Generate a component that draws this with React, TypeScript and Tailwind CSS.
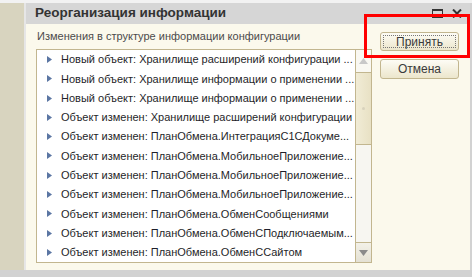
const rows = [
  'Новый объект: Хранилище расширений конфигурации ...',
  'Новый объект: Хранилище информации о применении ...',
  'Новый объект: Хранилище информации о применении ...',
  'Объект изменен: Хранилище расширений конфигурации',
  'Объект изменен: ПланОбмена.ИнтеграцияС1СДокуме...',
  'Объект изменен: ПланОбмена.МобильноеПриложение...',
  'Объект изменен: ПланОбмена.МобильноеПриложение...',
  'Объект изменен: ПланОбмена.МобильноеПриложение...',
  'Объект изменен: ПланОбмена.ОбменСообщениями',
  'Объект изменен: ПланОбмена.ОбменСПодключаемым...',
  'Объект изменен: ПланОбмена.ОбменССайтом',
]

function Arrow() {
  return (
    <svg width="5" height="7" viewBox="0 0 5 7" className="shrink-0">
      <path d="M0 0 L5 3.5 L0 7 Z" fill="#5b76a3" />
    </svg>
  )
}

export default function App() {
  return (
    <div
      className="w-[472px] h-[277px] flex flex-col bg-[#d2d2d2] overflow-hidden relative"
      style={{ fontFamily: '"Liberation Sans", Arial, sans-serif' }}
    >
      <div className="h-[3px] bg-[#f2f2f2]" />
      <div className="flex flex-1">
        <div className="w-[24px] bg-[#d8d4bf]" />
        <div className="w-[2px] bg-[#e6e6e6]" />
        <div className="flex-1 flex flex-col">
          {/* window */}
          <div className="h-[21px] bg-[#d6d6d6] flex items-center pl-[9px] pr-[8px]">
            <span className="text-[13.5px] font-bold text-[#333]">Реорганизация информации</span>
            <div className="ml-auto flex items-center gap-[9px]">
              <svg width="11" height="9" viewBox="0 0 11 9">
                <rect x="0.5" y="0.5" width="10" height="8" fill="none" stroke="#333" />
                <rect x="0" y="0" width="11" height="2" fill="#333" />
              </svg>
              <svg width="10" height="9" viewBox="0 0 10 9">
                <path d="M1 0.5 L9 8.5 M9 0.5 L1 8.5" stroke="#333" strokeWidth="2" />
              </svg>
            </div>
          </div>
          <div className="h-[246px] bg-[#fbf9ec] flex pl-[10px]">
            <div className="flex flex-col">
              <div className="h-[25px] flex items-center pl-[1px] text-[11px] text-[#4b4b4b]">
                Изменения в структуре информации конфигурации
              </div>
              <div className="w-[336px] h-[214px] border border-[#c2b68f] bg-white flex">
                <div className="flex-1 min-w-0 overflow-hidden flex flex-col">
                  {rows.map((r, i) => (
                    <div key={i} className="h-[19.3px] flex items-center pl-[10px] gap-[9px] text-[11px] text-[#1f1f2a] whitespace-nowrap">
                      <Arrow />
                      <span>{r}</span>
                    </div>
                  ))}
                </div>
                <div className="w-[16px] shrink-0 border-l border-[#c2b68f] flex flex-col bg-[#f7f6f1]">
                  <div className="h-[23px] border-b border-[#c2b68f] bg-[#f9f8f2] flex items-center justify-center">
                    <svg width="9" height="6" viewBox="0 0 9 6">
                      <path d="M0 6 L4.5 0 L9 6 Z" fill="#c8c8c8" />
                    </svg>
                  </div>
                  <div className="h-[72px] border-b border-[#c2b68f] bg-gradient-to-r from-[#f1ecd6] to-[#e8e1c4] flex items-center justify-center">
                    <div className="w-[3px] h-[3px] rounded-full bg-[#d8d2bc]" />
                  </div>
                  <div className="flex-1" />
                  <div className="h-[20px] border-t border-[#c2b68f] bg-gradient-to-b from-[#f3f1e8] to-[#e4e1d4] flex items-center justify-center">
                    <svg width="9" height="6" viewBox="0 0 9 6">
                      <path d="M0 0 L4.5 6 L9 0 Z" fill="#8a8a8a" />
                    </svg>
                  </div>
                </div>
              </div>
            </div>
            <div className="ml-[8px] mt-[8px] flex flex-col gap-[8px]">
              <button className="w-[79px] h-[19px] rounded-[3px] border border-[#c2b68f] bg-gradient-to-b from-[#fdfcf5] to-[#ece6cc] p-[2px] text-[12px] text-[#3a3a3a]">
                <div className="w-full h-full border border-dotted border-[#777] flex items-center justify-center">
                  Принять
                </div>
              </button>
              <button className="w-[79px] h-[20px] rounded-[3px] border border-[#c2b68f] bg-gradient-to-b from-[#fdfcf5] to-[#ece6cc] text-[12px] text-[#3a3a3a] flex items-center justify-center">
                Отмена
              </button>
            </div>
          </div>
        </div>
        <div className="w-[2px] bg-[#d2d2d2]" />
      </div>
      <div className="h-[7px]" />
      <div className="absolute left-[364px] top-[14px] w-[106px] h-[44px] border-[3px] border-[#ff0000]" />
    </div>
  )
}
